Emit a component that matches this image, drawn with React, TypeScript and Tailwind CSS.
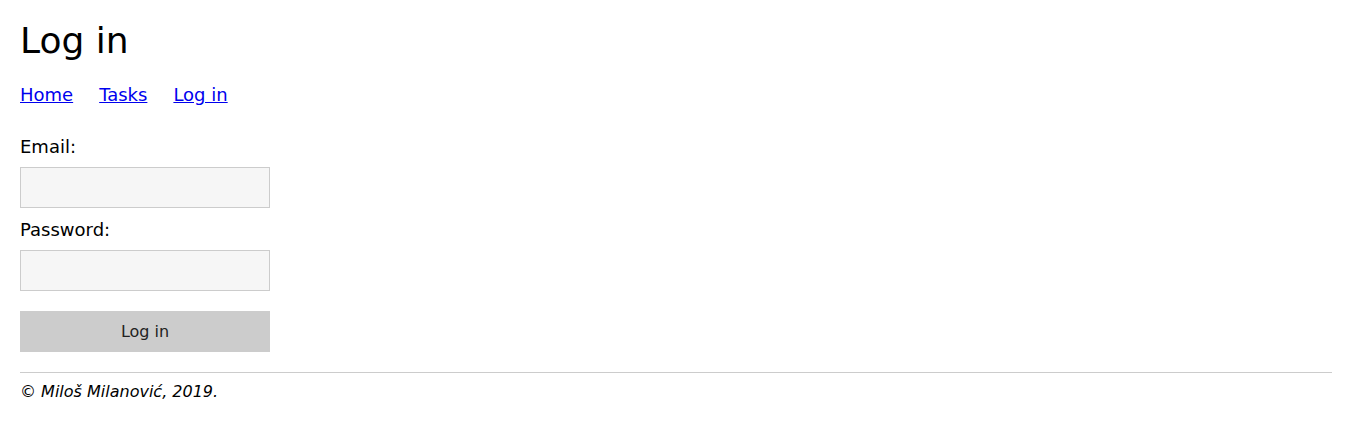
export default function App() {
  return (
    <div className="min-h-screen bg-white p-5 text-black" style={{ fontFamily: '"DejaVu Sans", sans-serif' }}>
      <h1 className="text-[36px] leading-[42px] font-normal">Log in</h1>

      <nav className="mt-[22px] flex gap-[26px] text-[18px] leading-[21px]">
        <a href="#" className="text-[#0000ee] underline">Home</a>
        <a href="#" className="text-[#0000ee] underline">Tasks</a>
        <a href="#" className="text-[#0000ee] underline">Log in</a>
      </nav>

      <form className="mt-[31px] flex flex-col" onSubmit={(e) => e.preventDefault()}>
        <label className="text-[18px] leading-[21px]">Email:</label>
        <input type="email" className="mt-[10px] h-[41px] w-[250px] border border-[#cccccc] bg-[#f6f6f6] outline-none" />
        <label className="mt-[11px] text-[18px] leading-[21px]">Password:</label>
        <input type="password" className="mt-[10px] h-[41px] w-[250px] border border-[#cccccc] bg-[#f6f6f6] outline-none" />
        <button type="submit" className="mt-[20px] h-[41px] w-[250px] bg-[#cccccc] text-[16px] text-[#222222]">
          Log in
        </button>
      </form>

      <hr className="mt-[20px] border-t border-[#cccccc]" />

      <footer className="mt-[9px] text-[16px] leading-[19px] italic">© Miloš Milanović, 2019.</footer>
    </div>
  );
}
